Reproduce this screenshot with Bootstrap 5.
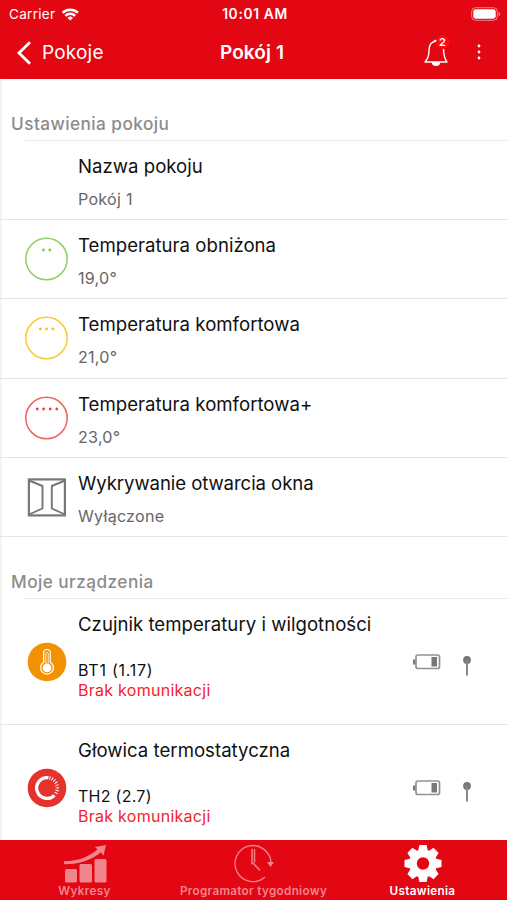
<!DOCTYPE html>
<html lang="pl">
<head>
<meta charset="utf-8">
<meta name="viewport" content="width=device-width, initial-scale=1">
<title>Pokój 1</title>
<link href="https://cdn.jsdelivr.net/npm/bootstrap@5.3.0/dist/css/bootstrap.min.css" rel="stylesheet">
<style>
body{font-family:Inter,"Liberation Sans",sans-serif;color:#111;letter-spacing:0}
.screen{height:900px;overflow:hidden;box-shadow:inset 2px 0 1px #f3f3f3}
.brand{background:#e30613;color:#fff}
svg{display:block;flex:none}
.status{height:27px;font-size:13.5px;line-height:28px;letter-spacing:.3px;padding:0 6px 0 9px}
.s-time{font-size:13.8px;letter-spacing:.65px}
.grid3{display:grid;grid-template-columns:1fr auto 1fr;align-items:center}
.topnav{height:52px;font-size:19px;line-height:52px;padding:0 19px 0 16px}
.s-back{margin-left:10px;letter-spacing:.2px}
.s-head{letter-spacing:.1px}
.bell{margin-right:29px;height:28px;line-height:14px}
.dots{margin:-2px 7.5px 0 0}
.count{position:absolute;left:12px;top:-4px;width:14px;height:14px;line-height:14px;font-size:11px;font-weight:600;letter-spacing:0;background:#ff0a14}
.sect{height:61px;padding:34.8px 0 0 11px;font-size:17.2px;line-height:20px;font-weight:500;letter-spacing:.45px;color:#8c8c8c}
.items{border-top:1px solid #e8e8e8;margin-left:25px}
.setting{height:79.4px;border-bottom:1px solid #e4e4e4;margin-left:-25px;padding:13.2px 0 0 25px}
.items .setting:first-child{height:78.9px}
.items .device,.items .device:first-child{height:126px;padding-top:12.4px;padding-right:36px}
.ico{width:43px;margin-right:10px}
.i-temp{margin-top:4px}
.i-win{margin-top:4px}
.i-dev{margin-top:27.8px}
.ttl{font-size:18.6px;line-height:24px;letter-spacing:.02px}
.tight{letter-spacing:-.08px}
.sub{font-size:16.1px;line-height:20px;margin-top:11px;letter-spacing:.25px;color:#666}
.dev{font-size:16px;line-height:20.5px;margin-top:24px;letter-spacing:.27px}
.wide{letter-spacing:.75px}
.err{color:#f5222d}
.radio{margin-top:42px}
.ant{margin:2px 0 0 22px}
.tabs{height:60px;font-size:11.7px;font-weight:600;line-height:14px;letter-spacing:.32px}
.tabs>div{height:60px;padding-top:4px}
.dim{color:#f2848b}
.tabs span{margin-top:1px}
</style>
<script src="https://cdn.jsdelivr.net/npm/bootstrap@5.3.0/dist/js/bootstrap.bundle.min.js"></script>
</head>
<body>
<div class="screen d-flex flex-column">
  <header class="brand flex-shrink-0">
    <div class="status grid3">
      <div class="d-flex align-items-center"><span>Carrier</span>
        <svg style="margin-left:6px" width="18.500" height="13" viewBox="0 0 20 14" fill="none" stroke="#fff" stroke-width="2.700"><path d="M1.700 5.100a12 12 0 0 1 16.600 0M4.700 8.400a7.700 7.700 0 0 1 10.600 0"/><path d="M10 13.600 7 10.700a4.300 4.300 0 0 1 6 0z" fill="#fff" stroke="none"/></svg>
      </div>
      <span class="s-time fw-semibold">10:01 AM</span>
      <svg class="ms-auto" width="30" height="14" viewBox="0 0 30 14"><rect x=".7" y=".7" width="25.600" height="12.600" rx="3.800" fill="none" stroke="#fff" stroke-opacity=".5"/><rect x="2.300" y="2.300" width="22.400" height="9.400" rx="2.400" fill="#fff"/><path d="M27.600 4.700v4.600q1.800-.7 1.800-2.300t-1.800-2.300z" fill="#fff" fill-opacity=".5"/></svg>
    </div>
    <nav class="topnav grid3">
      <div class="d-flex align-items-center"><svg width="16" height="24" viewBox="0 0 16 24" fill="none" stroke="#fff" stroke-width="2.800"><path d="M14 1.300 3 12l11 10.700"/></svg><span class="s-back">Pokoje</span></div>
      <span class="s-head fw-semibold">Pokój 1</span>
      <div class="d-flex align-items-center justify-content-end">
        <div class="position-relative bell">
          <svg width="24" height="28" viewBox="0 0 24 28" fill="none" stroke="#fff" stroke-width="1.400" stroke-linejoin="round"><path d="M13 2C7 2.200 5 6.500 5 11.500 5 18 3.500 20.500 1 23h22c-2-2.500-3.200-6-3.500-13"/><path d="M10.200 2.300a1.500 1.500 0 0 1 2.800 0"/><path d="M8.500 23.700h7c-.5 3.600-6.500 3.600-7 0z" fill="#fff"/></svg>
          <span class="count rounded-circle text-center">2</span>
        </div>
        <svg class="dots" width="4" height="16" viewBox="0 0 4 16" fill="#fff"><circle cx="2" cy="2" r="1.400"/><circle cx="2" cy="8" r="1.400"/><circle cx="2" cy="14" r="1.400"/></svg>
      </div>
    </nav>
  </header>

  <main class="flex-grow-1 overflow-hidden">
    <h2 class="sect mb-0">Ustawienia pokoju</h2>
    <div class="items">
      <div class="setting d-flex"><div class="ico"></div><div><div class="ttl">Nazwa pokoju</div><div class="sub">Pokój 1</div></div></div>
      <div class="setting d-flex"><svg class="ico i-temp" width="43" height="44" viewBox="0 0 43 44"><circle cx="21.500" cy="22" r="20.700" fill="none" stroke="#92cf62" stroke-width="1.500"/><g fill="#86c94f"><circle cx="18.500" cy="13" r="1.400"/><circle cx="24.800" cy="13" r="1.400"/></g></svg><div><div class="ttl">Temperatura obniżona</div><div class="sub">19,0°</div></div></div>
      <div class="setting d-flex"><svg class="ico i-temp" width="43" height="44" viewBox="0 0 43 44"><circle cx="21.500" cy="22" r="20.700" fill="none" stroke="#fbc933" stroke-width="1.500"/><g fill="#fbbd1c"><circle cx="15.300" cy="13" r="1.400"/><circle cx="21.500" cy="13" r="1.400"/><circle cx="27.800" cy="13" r="1.400"/></g></svg><div><div class="ttl">Temperatura komfortowa</div><div class="sub">21,0°</div></div></div>
      <div class="setting d-flex"><svg class="ico i-temp" width="43" height="44" viewBox="0 0 43 44"><circle cx="21.500" cy="22" r="20.700" fill="none" stroke="#ee635c" stroke-width="1.500"/><g fill="#e8433b"><circle cx="12.300" cy="13" r="1.400"/><circle cx="18.600" cy="13" r="1.400"/><circle cx="25.200" cy="13" r="1.400"/><circle cx="31.800" cy="13" r="1.400"/></g></svg><div><div class="ttl">Temperatura komfortowa+</div><div class="sub">23,0°</div></div></div>
      <div class="setting d-flex"><svg class="ico i-win" width="43" height="44" viewBox="0 0 43 44" fill="none" stroke="#777" stroke-width="1.900"><rect x="3.900" y="4.400" width="36" height="36" stroke-width="2.200"/><path d="M4 5.500 17.500 11v22.500L4 39.500M40 5.500 26.800 11v22.500L40 39.500"/></svg><div><div class="ttl tight">Wykrywanie otwarcia okna</div><div class="sub">Wyłączone</div></div></div>
    </div>

    <h2 class="sect mb-0">Moje urządzenia</h2>
    <div class="items">
      <div class="setting device d-flex">
        <svg class="ico i-dev" width="43" height="44" viewBox="0 0 43 44"><circle cx="22" cy="22" r="19.300" fill="#f39200"/><g fill="none" stroke="#fff" stroke-width="1.200"><path d="M18.700 22.200V12.800a3.300 3.300 0 0 1 6.600 0v9.400a6.400 6.400 0 1 1-6.600 0z"/><path d="M20.800 23.500V13.200q1.200-1.800 2.400 0v10.300" stroke-width=".8"/></g><circle cx="22" cy="27.800" r="4.400" fill="#fff"/></svg>
        <div><div class="ttl">Czujnik temperatury i wilgotności</div><div class="dev"><span class="wide">BT1 (1.17)</span><div class="err">Brak komunikacji</div></div></div>
        <div class="d-flex ms-auto radio"><svg width="28" height="16" viewBox="0 0 28 16"><rect x="3" y="1" width="23.500" height="13.500" rx="2" fill="none" stroke="#929292" stroke-width="1.700"/><path d="M0 5.500h2.300v5H0z" fill="#777"/><path d="M18.500 3h5.500v9.500h-5.500z" fill="#777"/></svg><svg class="ant" width="8" height="20" viewBox="0 0 8 20"><circle cx="4" cy="4" r="3.900" fill="#777"/><path d="M4 4v15.500" stroke="#888" stroke-width="2"/></svg></div>
      </div>
      <div class="setting device d-flex">
        <svg class="ico i-dev" width="43" height="44" viewBox="0 0 43 44"><circle cx="22" cy="22" r="19.300" fill="#e5322d"/><path d="M23.500 11.700a10.400 10.400 0 1 0 6 17.600" fill="none" stroke="#fff" stroke-width="3.200"/><path d="M24.500 11.800A10.400 10.400 0 0 1 30 28.500" fill="none" stroke="#fff" stroke-width="3.400" stroke-dasharray="1 1.600"/></svg>
        <div><div class="ttl">Głowica termostatyczna</div><div class="dev">TH2 (2.7)<div class="err">Brak komunikacji</div></div></div>
        <div class="d-flex ms-auto radio"><svg width="28" height="16" viewBox="0 0 28 16"><rect x="3" y="1" width="23.500" height="13.500" rx="2" fill="none" stroke="#929292" stroke-width="1.700"/><path d="M0 5.500h2.300v5H0z" fill="#777"/><path d="M18.500 3h5.500v9.500h-5.500z" fill="#777"/></svg><svg class="ant" width="8" height="20" viewBox="0 0 8 20"><circle cx="4" cy="4" r="3.900" fill="#777"/><path d="M4 4v15.500" stroke="#888" stroke-width="2"/></svg></div>
      </div>
    </div>
  </main>

  <footer class="brand tabs row g-0 flex-shrink-0">
    <div class="col d-flex flex-column align-items-center dim">
      <svg width="44" height="39" viewBox="0 0 44 39" fill="#f2848b"><rect x="2" y="25" width="12" height="13.500" rx="1.500"/><rect x="16.500" y="20" width="12.500" height="18.500" rx="1.500"/><rect x="31.500" y="15" width="12" height="23.500" rx="1.500"/><path d="M1 20.300C16 20.500 28 16.500 38 8.300l2.500 3.500L43 1 32 3l2.500 2.600C25 13.500 14 17.500 1 17.200z"/></svg>
      <span>Wykresy</span>
    </div>
    <div class="col d-flex flex-column align-items-center dim">
      <svg width="40" height="39" viewBox="0 0 40 39" fill="none" stroke="#f2848b" stroke-width="1.300"><path d="M31 33A18 18 0 1 1 37 19"/><path d="M18 5v14.500h1.500L26 26.500M20.500 5v13.500" stroke-width="1.500"/><path d="M33 18h7l-3.500 5z" fill="#f2848b" stroke="none"/></svg>
      <span>Programator tygodniowy</span>
    </div>
    <div class="col d-flex flex-column align-items-center">
      <svg width="38" height="39" viewBox="-19 -19.500 38 39"><g fill="#fff"><circle r="14"/><path id="tooth" d="M-5-12-3.600-18.500h7.200L5-12v24L3.600 18.500h-7.200L-5 12z"/><use href="#tooth" transform="rotate(45)"/><use href="#tooth" transform="rotate(90)"/><use href="#tooth" transform="rotate(135)"/></g><circle r="6.200" fill="#e30613"/></svg>
      <span>Ustawienia</span>
    </div>
  </footer>
</div>
</body>
</html>
